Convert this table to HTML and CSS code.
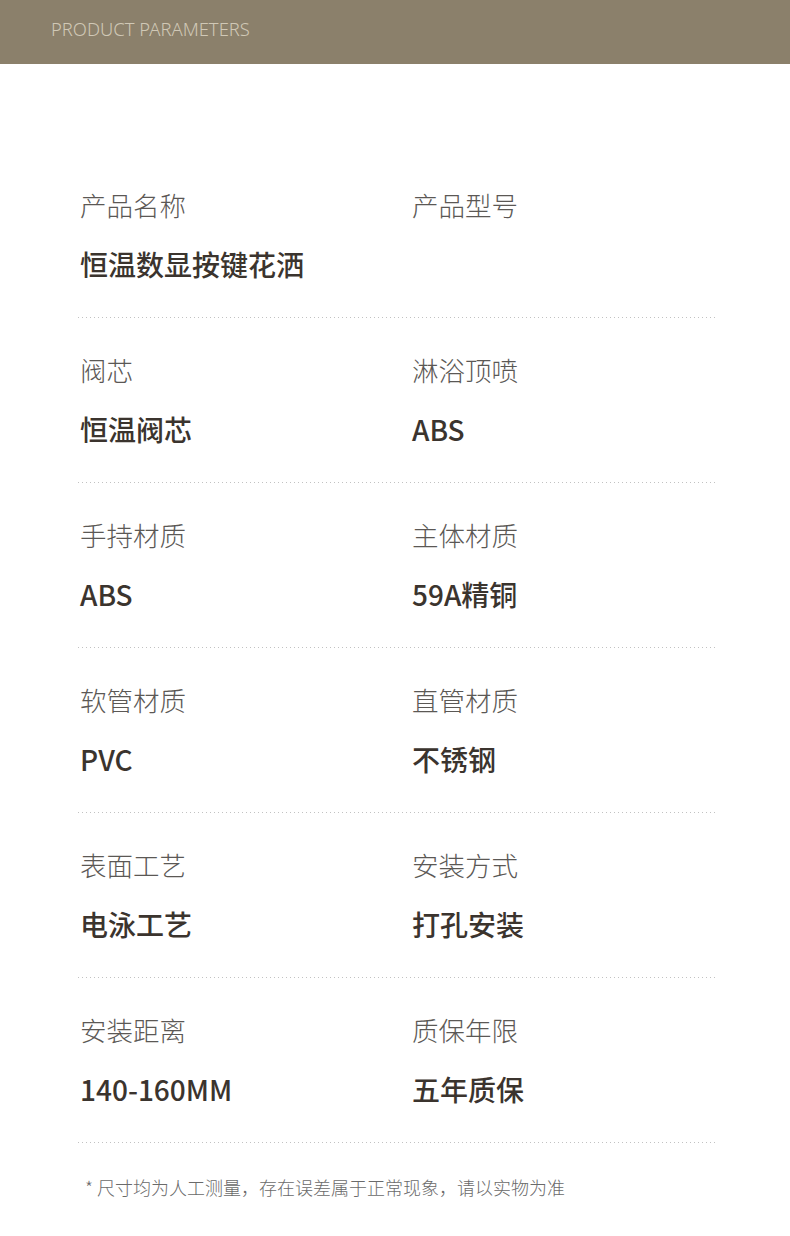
FILE: index.html
```html
<!DOCTYPE html>
<html lang="zh-CN">
<head>
<meta charset="utf-8">
<title>Product Parameters</title>
<link rel="stylesheet" href="styles.css">
</head>
<body>
<header class="banner"><span class="banner-title">PRODUCT PARAMETERS</span></header>
<main class="params">
  <div class="row">
    <div class="cell"><div class="label">产品名称</div><div class="value">恒温数显按键花洒</div></div>
    <div class="cell"><div class="label">产品型号</div><div class="value"></div></div>
  </div>
  <div class="row">
    <div class="cell"><div class="label">阀芯</div><div class="value">恒温阀芯</div></div>
    <div class="cell"><div class="label">淋浴顶喷</div><div class="value">ABS</div></div>
  </div>
  <div class="row">
    <div class="cell"><div class="label">手持材质</div><div class="value">ABS</div></div>
    <div class="cell"><div class="label">主体材质</div><div class="value">59A精铜</div></div>
  </div>
  <div class="row">
    <div class="cell"><div class="label">软管材质</div><div class="value">PVC</div></div>
    <div class="cell"><div class="label">直管材质</div><div class="value">不锈钢</div></div>
  </div>
  <div class="row">
    <div class="cell"><div class="label">表面工艺</div><div class="value">电泳工艺</div></div>
    <div class="cell"><div class="label">安装方式</div><div class="value">打孔安装</div></div>
  </div>
  <div class="row">
    <div class="cell"><div class="label">安装距离</div><div class="value">140-160MM</div></div>
    <div class="cell"><div class="label">质保年限</div><div class="value">五年质保</div></div>
  </div>
  <p class="note">* 尺寸均为人工测量，存在误差属于正常现象，请以实物为准</p>
</main>
</body>
</html>
```
FILE: styles.css
```css
html, body {
  margin: 0;
  padding: 0;
  background: #ffffff;
}
body {
  font-family: "Noto Sans CJK SC", "Noto Sans", sans-serif;
  width: 790px;
}
.banner {
  height: 64px;
  background: #8b806b;
  display: flex;
  align-items: center;
  padding-left: 51px;
  box-sizing: border-box;
}
.banner-title {
  font-family: "Noto Sans", "Open Sans", sans-serif;
  font-weight: 300;
  font-size: 18.4px;
  color: #d0c8b6;
  line-height: 20px;
  margin-top: -6px;
}
.params {
  padding: 89px 0 0 78px;
  width: 638px;
}
.row {
  display: grid;
  grid-template-columns: 332px 1fr;
  padding: 36px 0 38px 2px;
  background-image: linear-gradient(to right, #c2c2c2 1px, transparent 1px);
  background-size: 4px 1px;
  background-repeat: repeat-x;
  background-position: 0 bottom;
}
.label {
  font-size: 26.5px;
  line-height: 32px;
  font-weight: 300;
  color: #5b5855;
}
.value {
  margin-top: 27px;
  height: 32px;
  font-size: 28px;
  line-height: 32px;
  font-weight: 500;
  color: #3b342e;
}
.note {
  margin: 34px 0 0 7px;
  font-size: 18px;
  line-height: 20px;
  font-weight: 300;
  color: #6a6a6a;
}
```
